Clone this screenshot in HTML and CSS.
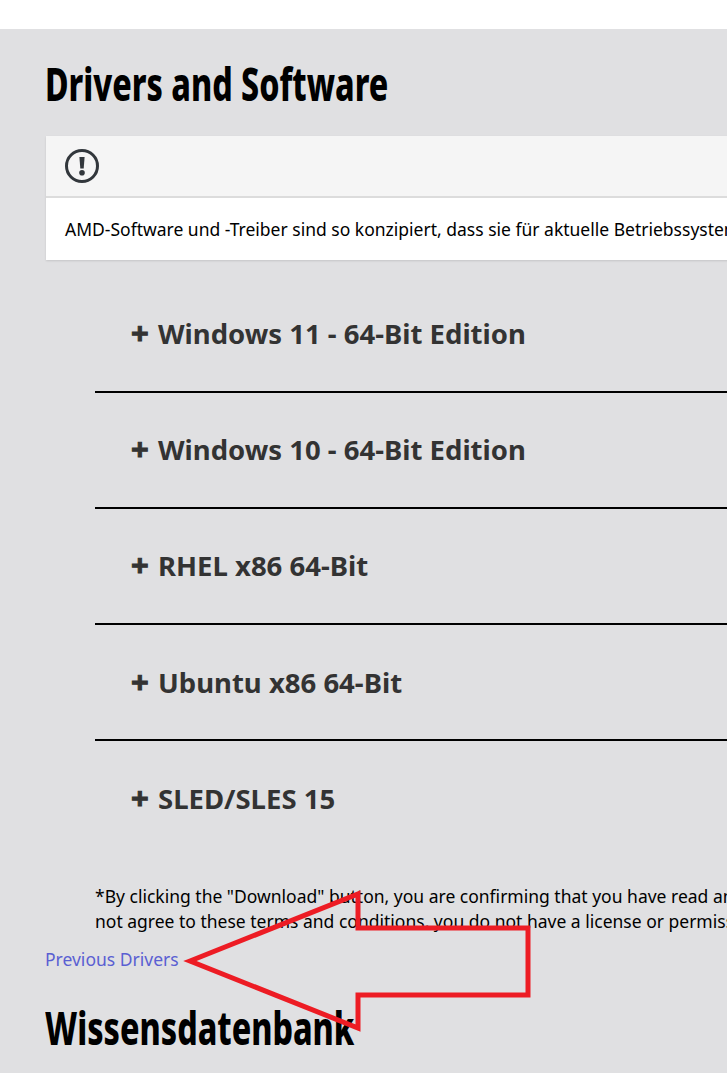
FILE: index.html
```html
<!DOCTYPE html>
<html lang="en">
<head>
<meta charset="utf-8">
<title>Drivers and Software</title>
<link rel="stylesheet" href="styles.css">
</head>
<body>
<div class="topbar"></div>
<main class="main">
  <h2 class="heading">Drivers and Software</h2>
  <section class="card">
    <div class="card-head">
      <svg class="alert-icon" viewBox="0 0 34 34" width="34" height="34" aria-hidden="true">
        <circle cx="17" cy="17" r="15.5" fill="none" stroke="#32373c" stroke-width="3"/>
        <path d="M14.4 8h5.2l-.9 11.4h-3.4z" fill="#32373c"/>
        <circle cx="17" cy="23.8" r="2.8" fill="#32373c"/>
      </svg>
    </div>
    <div class="card-body">AMD-Software und -Treiber sind so konzipiert, dass sie für aktuelle Betriebssysteme optimiert sind und die neuesten Funktionen unterstützen.</div>
  </section>
  <ul class="os-list">
    <li class="os-row"><span class="plus">+</span>Windows 11 - 64-Bit Edition</li>
    <li class="os-row"><span class="plus">+</span>Windows 10 - 64-Bit Edition</li>
    <li class="os-row"><span class="plus">+</span>RHEL x86 64-Bit</li>
    <li class="os-row"><span class="plus">+</span>Ubuntu x86 64-Bit</li>
    <li class="os-row"><span class="plus">+</span>SLED/SLES 15</li>
  </ul>
  <p class="note">*By clicking the "Download" button, you are confirming that you have read and agree to be bound by the terms and conditions below. If you do<br>not agree to these terms and conditions, you do not have a license or permission to download the software.</p>
  <a class="prev" href="#">Previous Drivers</a>
  <h2 class="heading kb">Wissensdatenbank</h2>
</main>
<svg class="arrow" width="727" height="1073" viewBox="0 0 727 1073" aria-hidden="true">
  <polygon points="190,961 358,894 358,928 528,928 528,995 358,995 358,1028" fill="none" stroke="#ed1c24" stroke-width="5" stroke-linejoin="miter"/>
</svg>
</body>
</html>
```
FILE: styles.css
```css
html, body {
  margin: 0;
  padding: 0;
  height: 1073px;
  overflow: hidden;
  background: #fff;
}
body {
  position: relative;
  width: 727px;
  font-family: "Noto Sans", "Open Sans", sans-serif;
  color: #000;
}
.topbar { height: 29px; background: #fff; }
.main {
  background: #e0e0e2;
  height: 1044px;
  padding: 24px 0 0 45px;
  box-sizing: border-box;
  overflow: hidden;
}
.heading {
  margin: 0;
  width: 600px;
  font-family: "Noto Sans", "Open Sans", sans-serif;
  font-weight: 800;
  font-size: 46px;
  line-height: 60px;
  color: #000;
  white-space: nowrap;
  transform: scaleX(.7);
  transform-origin: left center;
}
.card {
  margin: 23px 0 0 1px;
  width: 900px;
  background: #fff;
  box-shadow: 0 1px 2px rgba(0,0,0,.12);
}
.card-head {
  height: 60px;
  background: #f5f5f5;
  border-bottom: 2px solid #dcdcdc;
  display: flex;
  align-items: center;
  padding-left: 19px;
}
.card-body {
  height: 62px;
  padding-left: 19px;
  font-size: 17.5px;
  line-height: 62px;
  white-space: nowrap;
  color: #000;
}
.os-list {
  list-style: none;
  margin: 17px 0 0 50px;
  padding: 0;
  width: 900px;
}
.os-row {
  height: 114px;
  padding-left: 36px;
  font-size: 27.5px;
  font-weight: 700;
  line-height: 114px;
  color: #333;
  border-bottom: 2px solid #000;
  white-space: nowrap;
}
.os-row:nth-child(n+4) { line-height: 116px; }
.os-row:last-child { height: 143px; border-bottom: 0; }
.plus {
  display: inline-block;
  width: 27px;
  font-size: 31px;
  font-weight: 700;
  line-height: 1;
  -webkit-text-stroke: 1px #333;
}
.note {
  margin: 0 0 0 50px;
  width: 1000px;
  font-size: 17.5px;
  line-height: 25px;
  white-space: nowrap;
  color: #000;
}
.prev {
  display: block;
  margin-top: 13px;
  width: 140px;
  font-size: 17.5px;
  line-height: 25px;
  color: #5a5fd2;
  text-decoration: none;
}
.kb { margin-top: 25px; }
.arrow {
  position: absolute;
  left: 0;
  top: 0;
  pointer-events: none;
}
```
